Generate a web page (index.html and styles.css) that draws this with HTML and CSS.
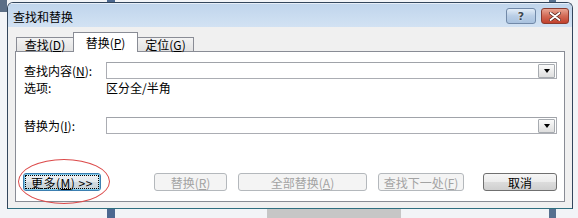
FILE: index.html
```html
<!DOCTYPE html>
<html lang="zh-CN">

<head>
    <meta charset="UTF-8">
    <title>查找和替换</title>
    <link rel="stylesheet" href="styles.css">
</head>

<body>
    <div class="desk">
        <div class="dialog">
            <div class="titlebar">
                <span class="title">查找和替换</span>
                <div class="caption-btns">
                    <span class="cap cap-help">?</span>
                    <span class="cap cap-close">
                        <svg width="12" height="9" viewBox="0 0 12 9">
                            <path d="M1.5 1 L10.5 8 M10.5 1 L1.5 8" stroke="#5a2a22" stroke-width="3.4" stroke-linecap="round"/>
                            <path d="M1.5 1 L10.5 8 M10.5 1 L1.5 8" stroke="#fff" stroke-width="1.8" stroke-linecap="round"/>
                        </svg>
                    </span>
                </div>
            </div>
            <div class="body">
                <div class="tabs">
                    <div class="tab">查找(<u>D</u>)</div>
                    <div class="tab active">替换(<u>P</u>)</div>
                    <div class="tab">定位(<u>G</u>)</div>
                </div>
                <div class="panel">
                    <div class="field-row">
                        <label class="lbl">查找内容(<u>N</u>):</label>
                        <div class="combo"><span class="drop"></span></div>
                    </div>
                    <div class="opt-row">
                        <span class="lbl">选项:</span>
                        <span>区分全/半角</span>
                    </div>
                    <div class="field-row replace-row">
                        <label class="lbl">替换为(<u>I</u>):</label>
                        <div class="combo"><span class="drop"></span></div>
                    </div>
                    <div class="btn-row">
                        <button class="btn btn-more"><span class="focus">更多(<u>M</u>) &gt;&gt;</span></button>
                        <button class="btn btn-replace" disabled>替换(<u>R</u>)</button>
                        <button class="btn btn-all" disabled>全部替换(<u>A</u>)</button>
                        <button class="btn btn-next" disabled>查找下一处(<u>F</u>)</button>
                        <button class="btn btn-cancel">取消</button>
                    </div>
                </div>
            </div>
        </div>
        <div class="mark"></div>
    </div>
</body>

</html>
```

FILE: styles.css
```css
* {
    box-sizing: border-box;
}

body {
    margin: 0;
    font-family: "Noto Sans CJK SC", "Liberation Sans", sans-serif;
    font-size: 12px;
    color: #000;
}

.desk {
    position: relative;
    width: 578px;
    height: 218px;
    padding: 2px 0 0 7px;
    overflow: hidden;
    background:
        linear-gradient(#5b6e86, #5b6e86) 0 0 / 7px 12px no-repeat,
        linear-gradient(#4c6890, #4c6890) 107px 0 / 8px 100% no-repeat,
        linear-gradient(#56708f, #56708f) 549px 0 / 7px 100% no-repeat,
        linear-gradient(#c6c6c6, #c6c6c6) 267px 209px / 134px 9px no-repeat,
        #f2f4f7;
}

.dialog {
    width: 566px;
    height: 207px;
    border: 1px solid #33465c;
    border-bottom-color: #2f6f80;
    border-radius: 6px 6px 0 0;
    background: #f0f0f0;
    display: flex;
    flex-direction: column;
    overflow: hidden;
}

.titlebar {
    height: 24px;
    display: flex;
    justify-content: space-between;
    align-items: flex-start;
    padding: 3px 3px 0 5px;
    background: linear-gradient(#c0d5ec, #d2e2f3);
    border-top: 1px solid #e6eef8;
}

.title {
    line-height: 20px;
}

.caption-btns {
    display: flex;
    gap: 5px;
    padding-top: 1px;
}

.cap {
    display: flex;
    align-items: center;
    justify-content: center;
    height: 16px;
    border-radius: 3px;
}

.cap-help {
    width: 30px;
    border: 1px solid #7189a8;
    background: linear-gradient(#e3edf8, #b9cee6 50%, #a9c2df);
    color: #3c4650;
    font-family: "DejaVu Sans", sans-serif;
    font-size: 11px;
    font-weight: bold;
    text-shadow: 0 0 2px #fff;
}

.cap-close {
    width: 28px;
    border: 1px solid #8b3b2f;
    background: linear-gradient(#e9a593, #d26a55 50%, #c2412e);
}

.body {
    flex: 1;
    display: flex;
    flex-direction: column;
    padding: 5px 7px 6px 7px;
}

.tabs {
    display: flex;
    align-items: flex-end;
    height: 20px;
    margin-bottom: -1px;
    padding-left: 1px;
    position: relative;
    z-index: 1;
}

.tab {
    height: 15px;
    line-height: 13px;
    text-align: center;
    border: 1px solid #898c95;
    background: linear-gradient(#f3f3f3, #e2e2e2);
}

.tab:first-child {
    width: 58px;
}

.tab:last-child {
    width: 57px;
    margin-left: -1px;
}

.tab.active {
    width: 65px;
    height: 20px;
    line-height: 19px;
    margin-left: -1px;
    border-bottom: none;
    background: #fff;
    position: relative;
    z-index: 2;
}

.panel {
    flex: 1;
    display: flex;
    flex-direction: column;
    background: #fff;
    border: 1px solid #898c95;
    padding: 10px 7px 10px 8px;
}

.field-row {
    display: flex;
    align-items: center;
    height: 17px;
}

.lbl {
    width: 82px;
    flex: none;
}

.combo {
    flex: 1;
    height: 17px;
    border: 1px solid #abadb3;
    border-top-color: #a0a3a9;
    display: flex;
    justify-content: flex-end;
    align-items: center;
    padding-right: 1px;
}

.drop {
    width: 17px;
    height: 14px;
    border: 1px solid #a7abb0;
    border-radius: 1px;
    background: linear-gradient(#fbfbfb, #dedede);
    display: flex;
    align-items: center;
    justify-content: center;
}

.drop::after {
    content: "";
    border-left: 3px solid transparent;
    border-right: 3px solid transparent;
    border-top: 4px solid #000;
    margin-top: 1px;
}

.opt-row {
    display: flex;
    margin-top: 2px;
    line-height: 14px;
}

.replace-row {
    margin-top: 22px;
}

.btn-row {
    display: flex;
    margin-top: auto;
    margin-left: -1px;
}

.btn {
    height: 18px;
    padding: 0;
    font: inherit;
    border: 1px solid #707070;
    border-radius: 3px;
    background: linear-gradient(#f6f6f6, #ececec 48%, #dcdcdc 52%, #cfcfcf);
    color: #000;
    display: flex;
    align-items: center;
    justify-content: center;
}

.btn:disabled {
    border-color: #b4b8bc;
    background: #f4f4f4;
    color: #a3a3a3;
}

.btn-more {
    width: 78px;
    padding: 1px;
    border-color: #3c7fb1;
    background: linear-gradient(#eef3f7, #e2e8ec 48%, #d2dbe0 52%, #c6d0d6);
    box-shadow: inset 0 0 0 1px #7fc9ea;
}

.focus {
    flex: 1;
    align-self: stretch;
    display: flex;
    align-items: center;
    justify-content: center;
    border: 1px dotted #000;
    letter-spacing: 0.5px;
}

.btn-replace {
    width: 73px;
    margin-left: 53px;
}

.btn-all {
    width: 129px;
    margin-left: 11px;
}

.btn-next {
    width: 86px;
    margin-left: 11px;
}

.btn-cancel {
    width: 74px;
    margin-left: 19px;
}

/* red annotation ring drawn over the dialog */
.mark {
    position: absolute;
    left: 18px;
    top: 159px;
    width: 92px;
    height: 45px;
    border: 1px solid #dc4b4b;
    border-radius: 50%;
}
```
